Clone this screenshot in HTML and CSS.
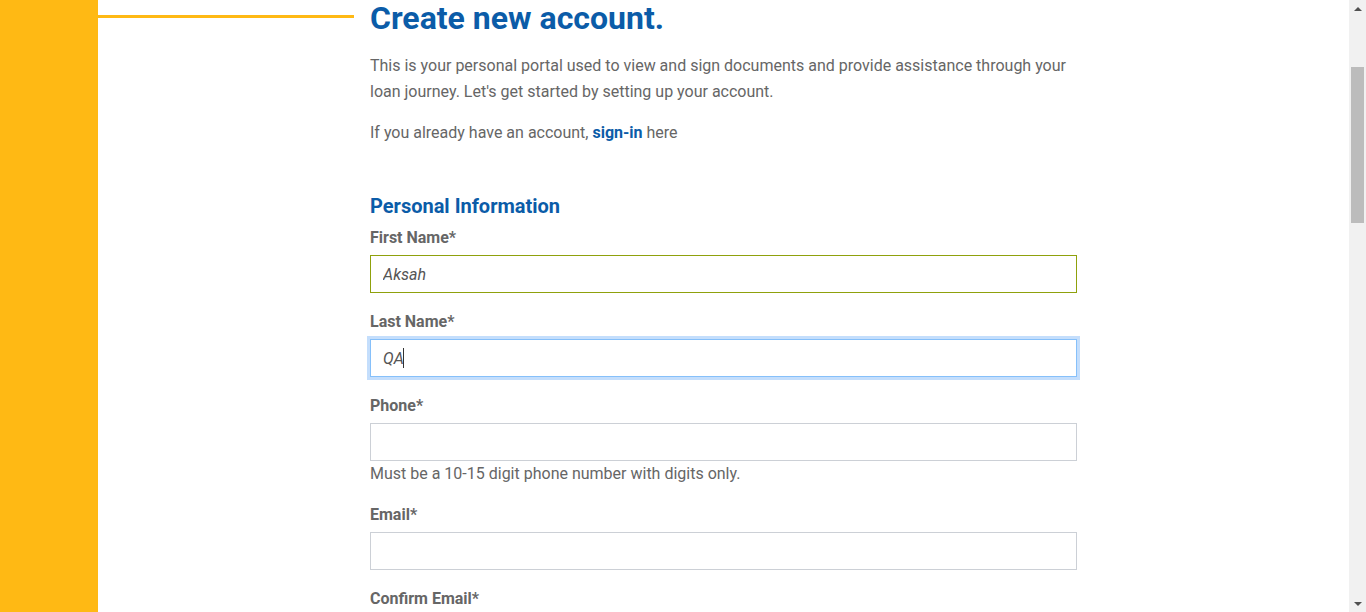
FILE: index.html
```html
<!DOCTYPE html>
<html lang="en">
<head>
<meta charset="utf-8">
<title>Create new account</title>
<link rel="stylesheet" href="styles.css">
</head>
<body>
<div class="page">
  <aside class="sidebar"></aside>
  <main class="main">
    <div class="deco-line"></div>
    <div class="content">
      <h1 class="title">Create new account.</h1>
      <p class="intro">This is your personal portal used to view and sign documents and provide assistance through your loan journey. Let's get started by setting up your account.</p>
      <p class="signin">If you already have an account, <a href="#" class="link">sign-in</a> here</p>
      <h2 class="section-title">Personal Information</h2>
      <form class="form">
        <div class="group">
          <label class="label">First Name*</label>
          <input class="input valid" type="text" value="Aksah">
        </div>
        <div class="group">
          <label class="label">Last Name*</label>
          <div class="input-wrap">
            <input class="input focused" type="text" value="QA">
            <span class="caret"></span>
          </div>
        </div>
        <div class="group">
          <label class="label">Phone*</label>
          <input class="input" type="text">
          <div class="help">Must be a 10-15 digit phone number with digits only.</div>
        </div>
        <div class="group">
          <label class="label">Email*</label>
          <input class="input" type="text">
        </div>
        <div class="group">
          <label class="label">Confirm Email*</label>
          <input class="input" type="text">
        </div>
      </form>
    </div>
  </main>
  <div class="scrollbar">
    <div class="arrow up"></div>
    <div class="track"><div class="thumb"></div></div>
    <div class="arrow down"></div>
  </div>
</div>
</body>
</html>
```

FILE: styles.css
```css
* { box-sizing: border-box; }
html, body { margin: 0; padding: 0; height: 100%; overflow: hidden; }
body {
  font-family: Roboto, "Liberation Sans", Arial, sans-serif;
  color: #666;
  background: #fff;
}
.page {
  display: flex;
  height: 612px;
  overflow: hidden;
}
.sidebar {
  width: 98px;
  flex: 0 0 98px;
  background: #ffb914;
}
.main {
  flex: 1;
  display: grid;
  grid-template-columns: 272px 707px;
  align-items: start;
}
.deco-line {
  height: 3px;
  margin-top: 15px;
  margin-right: 16px;
  background: #ffb914;
}
.content { display: flex; flex-direction: column; }
.title {
  margin: 0;
  font-size: 32px;
  line-height: 36px;
  font-weight: 700;
  color: #0b5ca8;
}
.intro {
  margin: 17px 0 0;
  font-size: 16px;
  line-height: 26px;
}
.signin {
  margin: 15px 0 0;
  font-size: 16px;
  line-height: 26px;
}
.link { color: #0b5ca8; font-weight: 700; text-decoration: none; }
.section-title {
  margin: 48px 0 0;
  font-size: 20px;
  line-height: 24px;
  font-weight: 700;
  color: #0b5ca8;
}
.form { margin-top: 7px; display: flex; flex-direction: column; gap: 16px; }
.group { display: flex; flex-direction: column; }
.label {
  font-size: 16px;
  line-height: 24px;
  font-weight: 700;
  color: #666;
  margin-top: 1px;
  margin-bottom: 5px;
}
.input-wrap { position: relative; }
.input {
  width: 707px;
  height: 38px;
  border: 1px solid #ccd0d6;
  border-radius: 0;
  padding: 0 12px;
  font-family: Roboto, "Liberation Sans", Arial, sans-serif;
  font-size: 16px;
  font-style: italic;
  color: #555;
  background: #fff;
  outline: none;
  display: block;
}
.input.valid { border-color: #8fa10c; }
.input.focused {
  border-color: #86c0fa;
  box-shadow: 0 0 0 3px #c4defc;
}
.caret {
  position: absolute;
  left: 33px;
  top: 9px;
  width: 1px;
  height: 20px;
  background: #333;
}
.help {
  margin-top: 1px;
  font-size: 16px;
  line-height: 24px;
  color: #666;
}
.scrollbar {
  width: 17px;
  flex: 0 0 17px;
  background: #f1f1f1;
  display: flex;
  flex-direction: column;
  align-items: center;
}
.arrow { width: 17px; height: 17px; display: flex; align-items: center; justify-content: center; }
.arrow.up::before {
  content: "";
  border-left: 4px solid transparent;
  border-right: 4px solid transparent;
  border-bottom: 4px solid #505050;
}
.arrow.down::before {
  content: "";
  border-left: 4px solid transparent;
  border-right: 4px solid transparent;
  border-top: 4px solid #505050;
}
.track { flex: 1; width: 17px; padding: 50px 2px 0; }
.thumb { height: 156px; background: #bcbcbc; }
```
